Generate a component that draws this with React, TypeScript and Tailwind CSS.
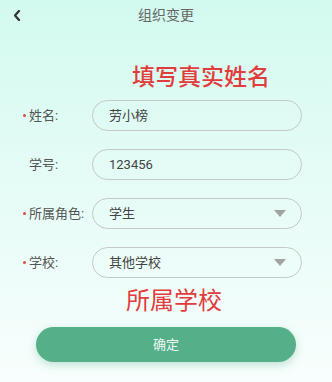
import React from 'react';

const FONT = 'Roboto, "Noto Sans CJK SC", sans-serif';

const ROWS = [
  { label: '姓名:', value: '劳小榜', required: true, select: false },
  { label: '学号:', value: '123456', required: false, select: false },
  { label: '所属角色:', value: '学生', required: true, select: true },
  { label: '学校:', value: '其他学校', required: true, select: true },
];

function FormRow({ label, value, required, select }: (typeof ROWS)[number]) {
  return (
    <div className="flex items-center h-[31px] pl-[23px]">
      <span className="flex w-[6px] items-center">
        {required && <span className="w-[3px] h-[3px] rounded-full bg-[#e04848]" />}
      </span>
      <span className="w-[63px] text-[13px] text-[#555]">{label}</span>
      <div className="flex items-center justify-between w-[210px] h-[31px] rounded-full border border-[#c4c9c7] pl-[16px] pr-[15px]">
        <span className="text-[13px] text-[#444]">{value}</span>
        {select && (
          <svg width="12" height="7" viewBox="0 0 12 7">
            <path d="M0 0 H12 L6 7 Z" fill="#a3a3a3" />
          </svg>
        )}
      </div>
    </div>
  );
}

export default function App() {
  return (
    <div
      className="w-[332px] h-[382px] overflow-hidden bg-gradient-to-b from-[#d3faef] via-[#e6fcf6] to-[#f8fefd]"
      style={{ fontFamily: FONT }}
    >
      {/* Header */}
      <div className="relative flex items-center justify-center h-[31px]">
        <svg className="absolute left-[13px] top-[10px]" width="8" height="11" viewBox="0 0 8 11">
          <path d="M6 1 L2 5.5 L6 10" fill="none" stroke="#333" strokeWidth="2.2" strokeLinecap="round" strokeLinejoin="round" />
        </svg>
        <span className="text-[14px] text-[#666]">组织变更</span>
      </div>

      {/* Annotation */}
      <div className="mt-[35px] pl-[132px] text-[23px] leading-[23px] font-medium text-[#e23c3c]">填写真实姓名</div>

      <div className="mt-[11px] flex flex-col gap-[18px]">
        {ROWS.map((row) => (
          <FormRow key={row.label} {...row} />
        ))}
      </div>

      <div className="mt-[11px] pl-[126px] text-[24px] leading-[24px] text-[#e23c3c]">所属学校</div>

      <button className="mt-[14px] ml-[36px] w-[260px] h-[35px] rounded-full bg-[#55b08a] text-[#eef8f3] text-[13px] shadow-[0_3px_8px_rgba(85,176,138,0.35)]">
        确定
      </button>
    </div>
  );
}
